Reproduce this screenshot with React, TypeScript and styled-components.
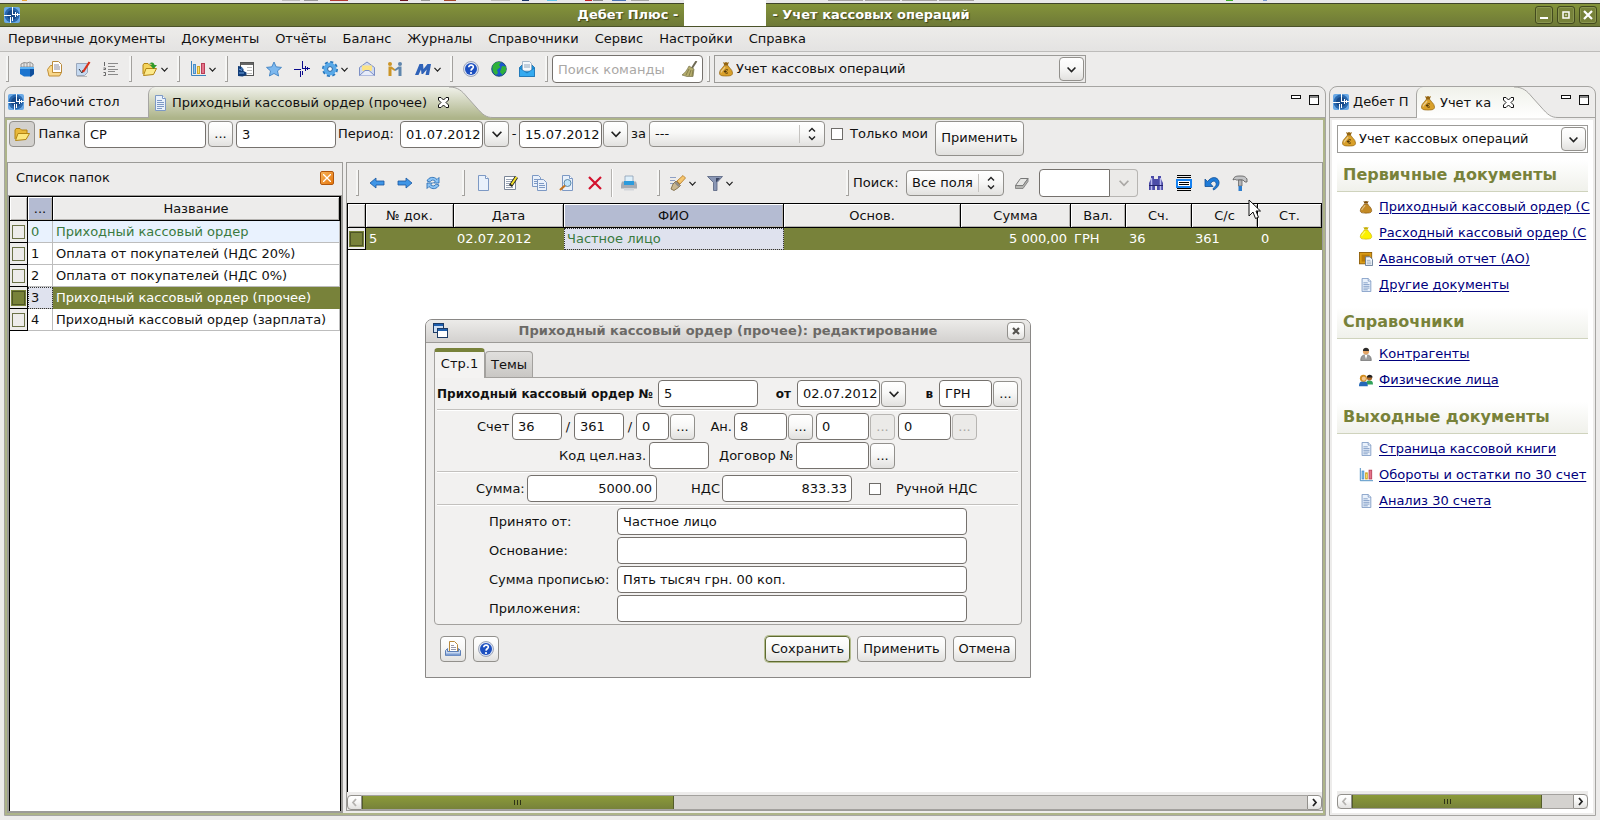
import React from "react";
import styled, { createGlobalStyle, css } from "styled-components";

const c = {
  face: "#edeceb",
  olive: "#78823a",
  sage: "#adb489",
  line: "#9c9b98",
  grid: "#bdbdbd",
  field: "#75716d",
};

const Global = createGlobalStyle`
  *, *::before, *::after { box-sizing: border-box; }
  html, body { margin: 0; }
  body, button, input, select {
    font-family: "DejaVu Sans", sans-serif;
    font-size: 13px;
    line-height: 18px;
    color: #111;
  }
  body { background: ${c.face}; }
  svg { display: block; flex: none; }
`;

/* ---------- icons ---------- */

const arrowPts = "1,8 7,3 7,6 15,6 15,10 7,10 7,13";
const crossPath = "M8.5 0v7M0 8.5h7M8 7.5h8M6.5 10v6M8.5 10v4M11.5 5v5M13.5 6v3";

const page = (
  <>
    <path d="M3.5 .5h7l3 3v12h-10z" fill="#e9f1fb" stroke="#7d99c4" />
    <path d="M10.500 .5v3h3" fill="#fff" stroke="#7d99c4" />
  </>
);

const bag = (fill: string, edge: string) => (
  <>
    <path d="M5 1l1.500.8L8 1l1.500.8L11 1 9.800 4H6.200z" fill={edge} />
    <path d="M6 4.500h4c.5 2 4.500 4 4.500 7.500 0 2.500-2 3-6.500 3s-6.500-.5-6.500-3C1.500 8.500 5.500 6.500 6 4.500z" fill={fill} stroke={edge} strokeWidth=".7" />
    <path d="M7 6c-1 2-3.500 3.500-4 5.500" stroke="#fff" strokeOpacity=".45" strokeWidth="1.300" fill="none" />
  </>
);

const drawings: Record<string, React.ReactNode> = {
  logo: (
    <>
      <rect width="16" height="16" rx="2" fill="#6aa9e6" />
      <circle cx="8" cy="8" r="7.500" fill="#2a68ae" />
      <circle cx="8" cy="8" r="5" fill="#174a8a" />
      <path d={crossPath} stroke="#fff" />
    </>
  ),
  cross: <path d={crossPath} stroke="#0a0a8c" />,
  bucket: (
    <>
      <path d="M2 6V3l3-1.500 3 .5 3-1 3 2v3z" fill="#e4e4e4" stroke="#7c7c7c" strokeWidth=".8" />
      <path d="M5 2v4M8 2v4M11 2v4" stroke="#888" strokeWidth=".8" />
      <path d="M1 6h14v7l-3 2.500H5L1 13z" fill="#1b74cf" />
      <path d="M1 6h14v2H1z" fill="#5eb2f3" />
      <path d="M11 8h4v5l-3 2.500h-1z" fill="#0f4f9c" />
    </>
  ),
  papers: (
    <>
      <path d="M5.500 .5h6l3 3v8h-9z" fill="#fff" stroke="#b98a3c" />
      <path d="M7 4h5M7 6h6M7 8h6" stroke="#8a8a9c" />
      <path d="M.5 8.500l3-4h2v7h9l-2 3.500H2z" fill="#f9d88b" stroke="#c08e36" />
    </>
  ),
  signdoc: (
    <>
      <path d="M1.500 2.500h11v9l-3 3h-8z" fill="#c5d9f0" stroke="#9aa7bb" />
      <path d="M4 8l3 4 1-3" stroke="#333" fill="none" />
      <path d="M8 11l6.500-10" stroke="#d7321c" strokeWidth="2.200" />
      <path d="M2 15.500h10" stroke="#bbb" />
    </>
  ),
  numlist: (
    <>
      <path d="M5 2.500h10M5 5.500h7M5 8.500h10M5 10.500h7M5 13.500h10" stroke="#8a8a8a" />
      <path d="M1.500 1v4M.5 7h2v1.500h-2M.5 11.500h2v3h-2" stroke="#666" fill="none" />
    </>
  ),
  folder: (
    <>
      <path d="M1 13V4l1-1.500h4L7.500 4H13v3" fill="#e9b93a" stroke="#b28413" />
      <path d="M1.500 14.500L4 7.500h11.500l-3.500 6z" fill="#fce77e" stroke="#b28413" />
    </>
  ),
  folderup: (
    <>
      <path d="M1 13V4l1-1.500h4L7.500 4H12v3" fill="#f4d35c" stroke="#b28413" />
      <path d="M1.500 14.500L4 7.500h10.500l-3 6z" fill="#fce98a" stroke="#b28413" />
      <path d="M7 3c3-2.500 5-1.500 5.500 1h2.500l-3.500 4-3.500-4h2C9.500 2.500 8.500 2.500 7 3z" fill="#2f9a2b" />
    </>
  ),
  chart: (
    <>
      <path d="M1.500 0v14.500H16" fill="none" stroke="#3c83bd" />
      <rect x="3.500" y="3.500" width="2" height="9" fill="#8cc3ee" stroke="#4b8fc9" />
      <rect x="7.500" y="5.500" width="2" height="7" fill="#fbe06a" stroke="#cfa52c" />
      <rect x="11.500" y="2.500" width="3" height="10" fill="#e5748a" stroke="#b83d56" />
    </>
  ),
  panel: (
    <>
      <rect x="2.500" y="1.500" width="13" height="13" fill="#fff" stroke="#555" />
      <path d="M3 3h12" stroke="#666" strokeWidth="2" />
      <path d="M9 6.500h5M9 9.500h5M9 12.500h5" stroke="#bbb" />
      <path d="M0 5l3 .5 2.500 2.500V10l3 1.500v2.500l-4 1.500L0 15z" fill="#123c78" />
      <path d="M1 8l3 1.500M1 12h5M4 6.500v2" stroke="#6ea6e4" />
    </>
  ),
  star: <path d="M8 1l2.200 4.800 5.300.6-4 3.500 1.100 5.100L8 12.500 3.400 15l1.100-5.100-4-3.500 5.300-.6z" fill="#7db8ee" stroke="#3478be" strokeWidth=".8" />,
  gear: (
    <>
      <circle cx="8" cy="8" r="6.800" fill="none" stroke="#2877bd" strokeWidth="2.400" strokeDasharray="3 2.340" />
      <circle cx="8" cy="8" r="4.500" fill="none" stroke="#59a9e8" strokeWidth="4" />
      <circle cx="8" cy="8" r="2.400" fill="#fff" stroke="#1d5f9f" />
    </>
  ),
  envelope: (
    <>
      <path d="M.5 6.500L8 1l7.500 5.500v8H.5z" fill="#cfd9f1" stroke="#7c8fc4" />
      <path d="M3 4.500h10v5l-5 2-5-2z" fill="#fbe487" />
      <path d="M.5 14.500L6 9.500h4l5.500 5" fill="#e7ecf9" stroke="#7c8fc4" />
    </>
  ),
  people: (
    <>
      <circle cx="3" cy="3" r="2" fill="#cc9527" />
      <circle cx="13" cy="3" r="2" fill="#5f86ad" />
      <path d="M1.500 5.500h3l4 3-1 1.500-3-2v7h-3z" fill="#cc9527" />
      <path d="M14.500 5.500h-3l-4 3 1 1.500 3-2v7h3z" fill="#5f86ad" />
    </>
  ),
  monogram: <path d="M0 14L4.500 3H8l.5 5L12.500 3H16l-2 11h-3.500l1.200-5.500L8 13H6.500L6 8.500 3.500 14z" fill="#2f62b8" />,
  help: (
    <>
      <circle cx="8" cy="8" r="7.500" fill="#dbe3f3" stroke="#8a93ab" strokeWidth=".8" />
      <circle cx="8" cy="8" r="6" fill="#1c4fc0" />
      <path d="M5.800 6.300C5.800 3.400 10.500 3.600 10.300 6.200 10.200 7.700 8.100 7.900 8 9.600" fill="none" stroke="#fff" strokeWidth="1.700" />
      <circle cx="8" cy="12" r="1.100" fill="#fff" />
    </>
  ),
  globe: (
    <>
      <circle cx="8" cy="8" r="7.300" fill="#1b57cf" stroke="#0f3d63" strokeWidth=".8" />
      <path d="M2 4c2-3 5-3.500 8-2.500L8 4 9.500 6 6 9l1 3-2 2C2 12 .5 8 2 4zM11 5l4 .5V10l-3.500 4L9 11l1-3z" fill="#2fb13b" />
    </>
  ),
  mail: (
    <>
      <path d="M.5 6.500L3 4h10l2.500 2.500v9H.5z" fill="#1d8fd8" stroke="#1a6cab" strokeWidth=".8" />
      <path d="M3.500 .5h7l2 2V10h-9z" fill="#f4f8fc" stroke="#94a9bf" strokeWidth=".8" />
      <path d="M5 4h6M5 6h6" stroke="#8fa5bb" />
      <path d="M.5 7l7.500 5 7.500-5v8.500H.5z" fill="#35aaf0" stroke="#1a6cab" strokeWidth=".6" />
    </>
  ),
  broom: (
    <>
      <path d="M14.500 0L10 7" stroke="#6f6a55" strokeWidth="2" />
      <path d="M7 5l5 3-1 7.500H5l-5-1.500c3-2 5-5 7-9z" fill="#b5ad6d" stroke="#77724b" strokeWidth=".7" />
      <path d="M7 8l-3 6M9 9l-2 6M11 9l-1 6" stroke="#716b3c" strokeWidth=".7" />
    </>
  ),
  money: (
    <>
      {bag("#d9a02a", "#94640f")}
      <path d="M10 9c-2.500-1-3.500.5-3.200 2 .3 1.500 2 1.500 3.200.8M5.800 10.500h3" fill="none" stroke="#4c3208" strokeWidth=".9" />
    </>
  ),
  bagbrown: bag("#c48a24", "#7c4c08"),
  bagyellow: bag("#fbf100", "#c6ae00"),
  safe: (
    <>
      <rect x=".5" y=".5" width="14" height="13" fill="#d99b16" stroke="#8c5c05" />
      <rect x="3" y="3" width="9" height="8" fill="#b87a08" />
      <path d="M7.500 5.500h5l3 3v7h-8z" fill="#f2f6fb" stroke="#5c7391" />
      <path d="M9 9.500h4M9 11.500h5M9 13.500h5" stroke="#9ab" />
    </>
  ),
  doc: (
    <>
      {page}
      <path d="M5 5.500h5M5 7.500h7M5 9.500h7M5 11.500h7M5 13.500h5" stroke="#7d99c4" />
    </>
  ),
  blank: page,
  edit: (
    <>
      <path d="M1.500 1.500h11v13h-11z" fill="#fff" stroke="#7a8597" />
      <path d="M3 4.500h7M3 6.500h6M3 8.500h5M3 10.500h4M3 12.500h7" stroke="#9aa4b4" />
      <path d="M7.500 11l6-9" stroke="#222" strokeWidth="3.600" />
      <path d="M8.500 9.500l5-7.500" stroke="#f4e22c" strokeWidth="2" />
    </>
  ),
  copy: (
    <>
      <path d="M1.500 .5h6l2 2v9h-8z" fill="#eaf1fb" stroke="#7d99c4" />
      <path d="M3 4.500h5M3 6.500h3M3 8.500h3" stroke="#7d99c4" />
      <path d="M6.500 4.500h6l3 3v8h-9z" fill="#eaf1fb" stroke="#7d99c4" />
      <path d="M8 8.500h5M8 10.500h6M8 12.500h6" stroke="#7d99c4" />
    </>
  ),
  find: (
    <>
      {page}
      <circle cx="8.500" cy="8" r="3.500" fill="#bfe4fa" stroke="#5d89a8" />
      <path d="M6 10.500L1 15" stroke="#c5741e" strokeWidth="2.200" />
    </>
  ),
  cut: <path d="M2 2l12 12M14 2L2 14" stroke="#d3122e" strokeWidth="2.200" />,
  printer: (
    <>
      <path d="M4 1h8v6H4z" fill="#dff0fb" stroke="#8aa0b4" strokeWidth=".8" />
      <path d="M1 6.500h14l1 3v4H0v-4z" fill="#a6abb3" />
      <path d="M3 6h10v4H3z" fill="#2b9bdd" />
      <path d="M3 13h10v2.500H3z" fill="#d3d6da" />
    </>
  ),
  printout: (
    <>
      <path d="M4.500 10V.5h5l3 3V10" fill="#fff" stroke="#b98a3c" />
      <path d="M6 4.500h3M6 6.500h5M6 8.500h5" stroke="#99a" />
      <path d="M.5 9.500l2-2v3h11v-3l2 2v5H.5z" fill="#c6d7f0" stroke="#5d7fb6" />
      <path d="M1 13.500h14" stroke="#7f9fd2" strokeWidth="2" />
    </>
  ),
  left: <polygon points={arrowPts} fill="#3f95e6" stroke="#19579f" strokeWidth=".8" />,
  right: <polygon points={arrowPts} transform="rotate(180 8 8)" fill="#3f95e6" stroke="#19579f" strokeWidth=".8" />,
  refresh: (
    <>
      <path d="M2 6c1.500-4 7-5 10-1.500l2-2v5.500H8.500l1.800-1.800C8.500 4.500 6 4.800 4.800 7z" fill="#8cc4f5" stroke="#1f65ad" strokeWidth=".8" />
      <path d="M14 10c-1.500 4-7 5-10 1.500l-2 2V8h5.500l-1.800 1.800c1.800 1.700 4.300 1.400 5.500-.8z" fill="#8cc4f5" stroke="#1f65ad" strokeWidth=".8" />
    </>
  ),
  torch: (
    <>
      <path d="M0 2.500h6M0 5.500h5M0 8.500h4" stroke="#8fa0c4" />
      <path d="M7 6l6-5.500 2.500 2.500L10 9z" fill="#f6c66f" stroke="#b0761f" strokeWidth=".8" />
      <path d="M6 6l4.500 4.500-2 2L4 15.500 1 14l2-5z" fill="#c9b791" stroke="#77623a" strokeWidth=".8" />
      <path d="M6 6.500l4 4-1.500 1.500-4-4z" fill="#8f8b86" />
    </>
  ),
  funnel: (
    <>
      <path d="M.5 1.500h15l-5.500 6v8H6.500v-8z" fill="#8a97b5" stroke="#55617e" strokeWidth=".8" />
      <path d="M9 3h4L9 7.500V14z" fill="#3c4663" />
    </>
  ),
  eraser: (
    <>
      <path d="M6.500 3.500h7.500l-5 7H1.500z" fill="#e6e6e4" stroke="#777" />
      <path d="M14 3.500v3l-5 7H1.500v-3H9z" fill="#b5b5b2" stroke="#777" strokeWidth=".8" />
    </>
  ),
  binoc: (
    <>
      <path d="M3 1h3v3h4V1h3v3l2 4v7H9v-4H7v4H1V8l2-4z" fill="#4c4ca8" />
      <path d="M3.500 3v12M12.500 3v12" stroke="#b9b9ee" strokeWidth="1.500" />
      <path d="M1 10.500h14" stroke="#23236d" />
    </>
  ),
  rows: (
    <>
      <path d="M1 .5h14M1 2.500h14M1 13.500h14M1 15.500h14" stroke="#000" />
      <rect x="1" y="5" width="14" height="7" fill="#fff" stroke="#1681f0" strokeWidth="2" />
      <path d="M3 7.500h10M3 9.500h10" stroke="#000" />
    </>
  ),
  undo: (
    <path d="M1 4l2.500 2.500C7 2 11.500 1.500 14 4.500c2.500 3.500.5 8-4.500 10.500l-.5-1.500c3-2 4-4.500 2.500-6.500-1.300-1.600-3.500-1-5 1.800L9 11.500H1z" fill="#1f7bd8" stroke="#134f94" strokeWidth=".8" />
  ),
  hammer: (
    <>
      <path d="M1 5c1-4 4-4 7-4 3 0 5 0 7 3v3h-2l-2-2H5.500L4.500 5c-1.500-1-2.500-.5-3.500 0z" fill="#c3c4c6" stroke="#555" strokeWidth=".8" />
      <path d="M6.500 5h3.500v6H6.500z" fill="#b3b4b6" stroke="#666" strokeWidth=".8" />
      <path d="M6.500 11h3.500v5H6.500z" fill="#2d7ecf" />
    </>
  ),
  person: (
    <>
      <path d="M2 15.500c0-5 2-6.500 6-6.500s6 1.500 6 6.500z" fill="#9b9b9b" stroke="#666" strokeWidth=".8" />
      <path d="M6.500 9h3L8 14z" fill="#fff" />
      <circle cx="8" cy="5" r="3.500" fill="#e3a566" />
      <path d="M4.500 4.500c0-5 7-5 7 0z" fill="#2b2b2b" />
    </>
  ),
  couple: (
    <>
      <path d="M8 13c0-4 1.500-4.500 4-4.500s4 1 4 4.500z" fill="#32a25a" />
      <circle cx="12" cy="5.500" r="3" fill="#a8652a" />
      <path d="M9 5c0-4 6.500-4 6.500 0z" fill="#222" />
      <path d="M0 15c0-4.500 2-5.500 5-5.500s5 1 5 5.500z" fill="#2568b8" />
      <circle cx="5" cy="6" r="4" fill="#d18d1f" />
      <circle cx="5.500" cy="6.500" r="2.400" fill="#f3c58e" />
    </>
  ),
  windows: (
    <>
      <rect x=".5" y=".5" width="10" height="9" fill="#cfe0f3" stroke="#1e3c66" />
      <path d="M1 2h9" stroke="#1e5fae" strokeWidth="2" />
      <rect x="4.500" y="5.500" width="10" height="9" fill="#fff" stroke="#1e3c66" />
      <path d="M5 7h9" stroke="#1e5fae" strokeWidth="2" />
    </>
  ),
};

const Icon = ({ name, size = 16 }: { name: string; size?: number }) => (
  <svg width={size} height={size} viewBox="0 0 16 16" fill="none" aria-hidden="true">
    {drawings[name]}
  </svg>
);

const Chevron = ({ size = 8, color = "#222" }: { size?: number; color?: string }) => (
  <svg width={size} height={size} viewBox="0 0 8 8" fill="none" aria-hidden="true">
    <path d="M0.500 2.200L4 5.800 7.500 2.200" stroke={color} strokeWidth="1.400" />
  </svg>
);

const UpDown = () => (
  <svg width="8" height="14" viewBox="0 0 8 14" fill="none" aria-hidden="true">
    <path d="M1 4.500L4 1.500l3 3M1 9.500l3 3 3-3" stroke="#222" strokeWidth="1.400" />
  </svg>
);

const CloseMark = () => (
  <svg width="11" height="11" viewBox="0 0 11 11" aria-hidden="true">
    <path
      d="M.5 .5h2.500l2.500 2.500L8 .5h2.500V3L8 5.500 10.500 8v2.500H8L5.500 8 3 10.500H.5V8L3 5.500.5 3z"
      fill="#fff"
      stroke="#111"
    />
  </svg>
);

/* ---------- shared controls ---------- */

const raised = css`
  border: 1px solid #92908c;
  border-radius: 4px;
  background: linear-gradient(#fff, #f8f8f7 45%, #e2e1df);
`;

const Button = styled.button<{ $w?: number; $h?: number; $primary?: boolean }>`
  ${raised}
  display: flex;
  align-items: center;
  justify-content: center;
  flex: none;
  width: ${(p) => (p.$w ? `${p.$w}px` : "auto")};
  height: ${(p) => p.$h ?? 26}px;
  padding: 0;
  ${(p) => p.$primary && `border-color: #5f6b31; box-shadow: 0 0 0 1px #b3bb8d;`}
  &:disabled { color: #aaa8a5; border-color: #b7b5b2; background: #ebeae8; }
`;

const TextBox = styled.input<{ $w?: number; $right?: boolean }>`
  width: ${(p) => (p.$w ? `${p.$w}px` : "auto")};
  ${(p) => !p.$w && "flex: 1; min-width: 0;"}
  flex-shrink: 0;
  height: 27px;
  padding: 0 ${(p) => (p.$right ? 4 : 1)}px 0 5px;
  border: 1px solid ${c.field};
  border-radius: 4px;
  background: #fff;
  text-align: ${(p) => (p.$right ? "right" : "left")};
`;

const Check = styled.input.attrs({ type: "checkbox" })`
  appearance: none;
  flex: none;
  width: 12px;
  height: 12px;
  margin: 0;
  border: 1px solid #6e6c69;
  background: #fff;
`;

const Caption = styled.label<{ $w?: number; $align?: string; $bold?: boolean }>`
  flex: none;
  width: ${(p) => (p.$w ? `${p.$w}px` : "auto")};
  text-align: ${(p) => p.$align ?? "left"};
  font-size: ${(p) => (p.$bold ? 12 : 13)}px;
  font-weight: ${(p) => (p.$bold ? 700 : 400)};
  white-space: nowrap;
`;

const Gap = styled.span<{ $w: number }>`
  flex: none;
  width: ${(p) => p.$w}px;
`;

const SpinWrap = styled.div<{ $w: number }>`
  ${raised}
  display: flex;
  align-items: center;
  flex: none;
  width: ${(p) => p.$w}px;
  height: 26px;
  padding-right: 8px;
`;

const PlainSelect = styled.select`
  appearance: none;
  flex: 1;
  min-width: 0;
  height: 18px;
  margin-right: 8px;
  padding: 0 0 0 5px;
  border: 0;
  border-right: 1px solid #c5c3c0;
  background: transparent;
`;

const Spin = ({ id, value, w }: { id: string; value: string; w: number }) => (
  <SpinWrap $w={w}>
    <PlainSelect id={id}>
      <option>{value}</option>
    </PlainSelect>
    <UpDown />
  </SpinWrap>
);

const ComboWrap = styled.div<{ $w?: number; $white?: boolean }>`
  display: flex;
  align-items: center;
  flex: none;
  width: ${(p) => (p.$w ? `${p.$w}px` : "auto")};
  height: 28px;
  padding: 0 1px 0 3px;
  border: 1px solid ${c.line};
  background: ${(p) => (p.$white ? "#fff" : c.face)};
  select { border: 0; padding-left: 2px; margin: 0; }
`;

const Combo = ({ w, white, label }: { w?: number; white?: boolean; label: string }) => (
  <ComboWrap $w={w} $white={white}>
    <Icon name="money" />
    <PlainSelect aria-label={label}>
      <option>Учет кассовых операций</option>
    </PlainSelect>
    <Button $w={25} $h={24} aria-label="Открыть список"><Chevron size={9} /></Button>
  </ComboWrap>
);

/* ---------- window frame ---------- */

const Shell = styled.div`
  display: flex;
  flex-direction: column;
  min-height: 100vh;
  min-width: 1280px;
`;

const Backdrop = styled.div`
  height: 3px;
  overflow: hidden;
  background: #e9e8ea;
`;

const TitleBar = styled.header`
  display: flex;
  align-items: center;
  gap: 4px;
  height: 24px;
  padding: 0 3px 0 4px;
  border-top: 1px solid #3f442a;
  border-bottom: 1px solid #4b5229;
  background: linear-gradient(#84933a, #6e7937);
`;

const Title = styled.h1`
  display: flex;
  align-items: center;
  justify-content: center;
  flex: 1;
  gap: 6px;
  margin: 0;
  padding-right: 8px;
  color: #fff;
  font-size: 13px;
  font-weight: 700;
  line-height: 22px;
  text-shadow: 1px 1px 1px #3c431b;
`;

const Blank = styled.span`
  width: 82px;
  height: 26px;
  margin-top: -4px;
  background: #fff;
`;

const FrameButton = styled.button`
  display: grid;
  place-items: center;
  width: 18px;
  height: 18px;
  padding: 0;
  border: 1px solid #434a1e;
  border-radius: 3px;
  background: #77823a;
  box-shadow: inset 0 0 0 1px #8a9650;
`;

const MenuBar = styled.nav`
  display: flex;
  align-items: center;
  gap: 16px;
  height: 25px;
  padding: 0 8px;
  border-bottom: 1px solid #bdbcba;
  background: linear-gradient(#edecea, #e4e3e2);
`;

const MenuItem = styled.button`
  padding: 0;
  border: 0;
  background: none;
  white-space: nowrap;
`;

const Toolbar = styled.div<{ $pane?: boolean }>`
  display: flex;
  align-items: center;
  flex: none;
  height: ${(p) => (p.$pane ? 40 : 34)}px;
  padding-left: ${(p) => (p.$pane ? 5 : 2)}px;
`;

const Grip = styled.span<{ $before?: number }>`
  flex: none;
  width: 3px;
  height: 26px;
  margin: 0 4px 0 ${(p) => p.$before ?? 4}px;
  border-right: 1px solid #a3a19e;
  border-bottom: 1px solid #a3a19e;
  background: #f6f6f5;
`;

const Rule = styled.span`
  flex: none;
  width: 2px;
  height: 28px;
  margin: 0 2px;
  border-left: 1px solid #b5b3b0;
  background: #fff;
`;

const ToolButton = styled.button<{ $menu?: boolean }>`
  display: flex;
  align-items: center;
  flex: none;
  width: ${(p) => (p.$menu ? 37 : 28)}px;
  height: 28px;
  padding: 0 0 0 6px;
  border: 0;
  background: none;
  gap: 3px;
`;

const Tool = ({ icon, menu, label }: { icon: string; menu?: boolean; label: string }) => (
  <ToolButton $menu={menu} aria-label={label}>
    <Icon name={icon} />
    {menu && <Chevron size={7} />}
  </ToolButton>
);

const CommandBox = styled.div`
  display: flex;
  align-items: center;
  flex: none;
  width: 151px;
  height: 28px;
  padding-right: 4px;
  border: 1px solid ${c.field};
  border-radius: 4px;
  background: #fff;
  input { border: 0; height: 24px; }
  input::placeholder { color: #aaa8a6; opacity: 1; }
`;

const Workspace = styled.main`
  display: flex;
  flex: 1;
  gap: 3px;
  padding: 0 4px 4px;
`;

/* ---------- tab folders ---------- */

const Folder = styled.section<{ $w?: number }>`
  display: flex;
  flex-direction: column;
  ${(p) => (p.$w ? `flex: none; width: ${p.$w}px;` : "flex: 1; min-width: 0;")}
  border: 1px solid #a6a5a2;
  border-radius: 8px 8px 0 0;
`;

const TabStrip = styled.div`
  display: flex;
  flex: none;
  height: 31px;
`;

const Tab = styled.button<{ $w: number; $on?: boolean; $tint?: string }>`
  display: flex;
  align-items: center;
  flex: none;
  gap: 4px;
  width: ${(p) => p.$w}px;
  padding: 0 0 0 3px;
  border: 0;
  border-bottom: 1px solid #a6a5a2;
  background: none;
  white-space: nowrap;
  ${(p) =>
    p.$on &&
    css`
      border-bottom: 0;
      border-left: 1px solid #a6a5a2;
      border-radius: 7px 0 0 0;
      background: linear-gradient(#f0f1ea, ${p.$tint});
    `}
`;

const TabClose = styled.span`
  flex: 1;
  display: flex;
  justify-content: flex-end;
`;

const TabTail = ({ from, to, id }: { from: string; to: string; id: string }) => (
  <svg width="44" height="31" viewBox="0 0 44 31" aria-hidden="true">
    <defs>
      <linearGradient id={id} x1="0" y1="0" x2="0" y2="1">
        <stop offset="0" stopColor={from} />
        <stop offset="1" stopColor={to} />
      </linearGradient>
    </defs>
    <path d="M0 0C9 0 13 4 18 10L27 20C34 28 37 30.500 44 30.500V31H0z" fill={`url(#${id})`} />
    <path d="M0 0C9 0 13 4 18 10L27 20C34 28 37 30.500 44 30.500" fill="none" stroke="#a6a5a2" />
  </svg>
);

const TabRest = styled.div`
  display: flex;
  flex: 1;
  justify-content: flex-end;
  gap: 8px;
  padding: 8px 6px 0 0;
  border-bottom: 1px solid #a6a5a2;
`;

const MiniButton = styled.button`
  display: flex;
  align-items: flex-start;
  height: 12px;
  padding: 0;
  border: 0;
  background: none;
`;

const PaneButtons = () => (
  <TabRest>
    <MiniButton aria-label="Свернуть">
      <svg width="10" height="11"><rect x=".5" y=".5" width="9" height="3" fill="#fff" stroke="#111" /></svg>
    </MiniButton>
    <MiniButton aria-label="Развернуть">
      <svg width="10" height="11"><rect x=".5" y=".5" width="9" height="9" fill="#fff" stroke="#111" /><path d="M1 2h8" stroke="#111" /></svg>
    </MiniButton>
  </TabRest>
);

const FolderBody = styled.div<{ $edge: string; $fill: string }>`
  display: flex;
  flex-direction: column;
  flex: 1;
  border: 2px solid ${(p) => p.$edge};
  background: ${(p) => p.$fill};
`;

const FilterBar = styled.form`
  display: flex;
  align-items: center;
  align-self: flex-start;
  height: 42px;
  padding: 0 0 14px 2px;
`;

const Toggle = styled(Button)`
  background: #d3d1ce;
`;

const Apply = styled(Button)`
  margin-bottom: -8px;
`;

const Panes = styled.div`
  display: flex;
  flex: 1;
  gap: 3px;
`;

/* ---------- grids ---------- */

const ListPane = styled.section`
  display: flex;
  flex-direction: column;
  flex: none;
  width: 336px;
  border: 1px solid ${c.line};
  border-bottom-width: 2px;
`;

const ListHead = styled.div`
  display: flex;
  align-items: center;
  justify-content: space-between;
  height: 33px;
  padding: 0 8px 3px;
  h2 { margin: 0; font-size: 13px; font-weight: 400; }
`;

const OrangeClose = styled.button`
  display: grid;
  place-items: center;
  width: 14px;
  height: 14px;
  padding: 0;
  border: 1px solid #b1560c;
  border-radius: 2px;
  background: linear-gradient(135deg, #f8b45c, #e5750a);
`;

const Sheet = styled.div<{ $framed?: boolean }>`
  flex: 1;
  border: 0 solid #000;
  border-width: 1px 0 0 1px;
  background: #fff;
  ${(p) => p.$framed && `margin: 0 1px; border-right-width: 1px; outline: 1px solid ${c.line};`}
`;

const Table = styled.table`
  width: 100%;
  table-layout: fixed;
  border-spacing: 0;
`;

const Th = styled.th<{ $on?: boolean }>`
  height: 24px;
  padding: 0;
  border-right: 1px solid #000;
  border-bottom: 1px solid #000;
  background: ${(p) => (p.$on ? "#b4bbd2" : c.face)};
  box-shadow: inset 1px 1px 0 #fff, inset -1px -1px 0 #b5b3b0;
  font-weight: 400;
`;

const Td = styled.td<{ $sel?: boolean; $tone?: "green" | "focus"; $right?: boolean }>`
  height: 22px;
  padding: 0 3px;
  border-right: 1px solid ${(p) => (p.$sel ? c.olive : c.grid)};
  border-bottom: 1px solid ${(p) => (p.$sel ? c.olive : c.grid)};
  background: ${(p) => (p.$sel ? c.olive : "#fff")};
  color: ${(p) => (p.$sel ? "#fff" : "#111")};
  text-align: ${(p) => (p.$right ? "right" : "left")};
  line-height: 20px;
  white-space: nowrap;
  ${(p) => p.$tone === "green" && "background: #e9f2fe; color: #3a7a3f;"}
  ${(p) =>
    p.$tone === "focus" &&
    "background: #dfe2ee; color: #111; outline: 1px dotted #333; outline-offset: -1px;"}
`;

const MarkCell = styled.td`
  height: 22px;
  padding: 0 0 0 2px;
  border-right: 1px solid #000;
  border-bottom: 1px solid #000;
  background: ${c.face};
  line-height: 0;
`;

const Mark = styled.input.attrs({ type: "checkbox" })`
  appearance: none;
  width: 13px;
  height: 14px;
  margin: 0;
  border: 1px solid #6b7248;
  background: ${c.face};
  &:checked { background: ${c.olive}; box-shadow: 0 0 0 1px ${c.olive}; border-color: #4d5425; }
`;

const folders = [
  "Приходный кассовый ордер",
  "Оплата от покупателей (НДС 20%)",
  "Оплата от покупателей (НДС 0%)",
  "Приходный кассовый ордер (прочее)",
  "Приходный кассовый ордер (зарплата)",
];

const FolderTable = () => (
  <Table>
    <colgroup><col width="18" /><col width="25" /><col /></colgroup>
    <thead>
      <tr><Th /><Th $on>...</Th><Th>Название</Th></tr>
    </thead>
    <tbody>
      {folders.map((name, i) => (
        <tr key={name}>
          <MarkCell><Mark aria-label={name} defaultChecked={i === 3} /></MarkCell>
          <Td $tone={i === 0 ? "green" : i === 3 ? "focus" : undefined}>{i}</Td>
          <Td $sel={i === 3} $tone={i === 0 ? "green" : undefined}>{name}</Td>
        </tr>
      ))}
    </tbody>
  </Table>
);

const DocPane = styled.section`
  position: relative;
  display: flex;
  flex-direction: column;
  flex: 1;
  min-width: 0;
  margin-bottom: 2px;
  border: 1px solid ${c.line};
`;

const docWidths = [18, 88, 110, 220, 177, 110, 55, 66, 66];
const docHeads = ["№ док.", "Дата", "ФИО", "Основ.", "Сумма", "Вал.", "Сч.", "С/с", "Ст."];

const GreenText = styled.span`
  color: #3a7a3f;
`;

const DocTable = () => (
  <Table>
    <colgroup>
      {docWidths.map((w, i) => <col key={i} width={w} />)}
      <col />
    </colgroup>
    <thead>
      <tr><Th />{docHeads.map((h) => <Th key={h} $on={h === "ФИО"}>{h}</Th>)}</tr>
    </thead>
    <tbody>
      <tr>
        <MarkCell><Mark aria-label="Документ 5" defaultChecked /></MarkCell>
        <Td $sel>5</Td>
        <Td $sel>02.07.2012</Td>
        <Td $tone="focus"><GreenText>Частное лицо</GreenText></Td>
        <Td $sel />
        <Td $sel $right>5 000,00</Td>
        <Td $sel>ГРН</Td>
        <Td $sel>36</Td>
        <Td $sel>361</Td>
        <Td $sel>0</Td>
      </tr>
    </tbody>
  </Table>
);

const SearchField = styled.div`
  display: flex;
  flex: none;
  margin: 0 4px 0 3px;
  input { height: 28px; border-radius: 4px 0 0 4px; }
  button { border-radius: 0 4px 4px 0; border-left: 0; }
`;

/* ---------- scrollbar ---------- */

const ScrollRow = styled.div`
  display: flex;
  flex: none;
  height: 18px;
  padding-top: 3px;
  background: ${c.face};
`;

const ScrollButton = styled.button<{ $end?: boolean }>`
  ${raised}
  display: grid;
  place-items: center;
  flex: none;
  width: 15px;
  padding: 0;
  border-radius: ${(p) => (p.$end ? "0 4px 4px 0" : "4px 0 0 4px")};
`;

const Track = styled.div`
  flex: 1;
  border: 1px solid #a3a19e;
  border-width: 1px 0;
  background: #d4d2cf;
`;

const Thumb = styled.div<{ $share: number }>`
  display: flex;
  align-items: center;
  justify-content: center;
  gap: 2px;
  width: ${(p) => p.$share}%;
  height: 13px;
  border: 1px solid #545d2a;
  border-width: 0 1px;
  background: linear-gradient(#8b9a39, #77823a);
  i { width: 1px; height: 5px; background: #2e3316; }
`;

const ScrollArrow = ({ flip, color }: { flip?: boolean; color: string }) => (
  <svg width="7" height="9" viewBox="0 0 7 9" fill="none" aria-hidden="true">
    <path d={flip ? "M5 1L2 4.500 5 8" : "M2 1l3 3.500L2 8"} stroke={color} strokeWidth="1.800" />
  </svg>
);

const Scrollbar = ({ share }: { share: number }) => (
  <ScrollRow>
    <ScrollButton aria-label="Влево"><ScrollArrow flip color="#b5b3b0" /></ScrollButton>
    <Track><Thumb $share={share}><i /><i /><i /></Thumb></Track>
    <ScrollButton $end aria-label="Вправо"><ScrollArrow color="#222" /></ScrollButton>
  </ScrollRow>
);

/* ---------- dialog ---------- */

const Dialog = styled.section`
  position: absolute;
  left: 78px;
  top: 156px;
  display: flex;
  flex-direction: column;
  width: 606px;
  border: 1px solid #8a8886;
  border-radius: 7px 7px 0 0;
  background: ${c.face};
`;

const DialogTitle = styled.header`
  display: flex;
  align-items: center;
  height: 23px;
  padding: 0 5px 0 7px;
  border-bottom: 1px solid #9c9a97;
  border-radius: 6px 6px 0 0;
  background: linear-gradient(#ecebe9, #d3d1cf);
  h2 {
    flex: 1;
    margin: 0;
    color: #6b6966;
    font-size: 13px;
    text-align: center;
  }
`;

const DialogTabs = styled.div`
  display: flex;
  align-items: flex-end;
  height: 34px;
  padding-left: 8px;
`;

const DialogTab = styled.button<{ $on?: boolean }>`
  height: ${(p) => (p.$on ? 30 : 26)}px;
  width: ${(p) => (p.$on ? 51 : 48)}px;
  padding: 0;
  border: 1px solid #a3a19e;
  border-bottom: 0;
  border-radius: 4px 4px 0 0;
  background: linear-gradient(#e0dfdd, #c9c7c4);
  ${(p) =>
    p.$on &&
    css`
      border-top: 4px solid ${c.olive};
      margin-bottom: -1px;
      padding-bottom: 3px;
      background: #f4f3f2;
      z-index: 1;
    `}
`;

const DialogPanel = styled.form`
  display: flex;
  flex-direction: column;
  gap: 2px;
  margin: 0 8px;
  padding: 2px 3px 2px 2px;
  border: 1px solid #a3a19e;
  border-radius: 0 4px 4px 4px;
  background: #f2f1f0;
`;

const FormRow = styled.div<{ $in?: number }>`
  display: flex;
  align-items: center;
  height: 27px;
  padding-left: ${(p) => p.$in ?? 0}px;
`;

const Divider = styled.hr`
  width: 100%;
  height: 2px;
  margin: 0;
  border: 0;
  border-top: 1px solid #c3c1be;
  background: #fff;
`;

const DialogFoot = styled.footer`
  display: flex;
  gap: 7px;
  padding: 11px 14px 15px;
`;

const Spread = styled.span`
  flex: 1;
`;

const noteRows = [
  ["Принято от:", "Частное лицо"],
  ["Основание:", ""],
  ["Сумма прописью:", "Пять тысяч грн. 00 коп."],
  ["Приложения:", ""],
];

const EditDialog = () => (
  <Dialog role="dialog" aria-labelledby="dialog-title">
    <DialogTitle>
      <Icon name="windows" />
      <h2 id="dialog-title">Приходный кассовый ордер (прочее): редактирование</h2>
      <Button $w={18} $h={18} aria-label="Закрыть">
        <svg width="8" height="8"><path d="M1 1l6 6M7 1L1 7" stroke="#55534f" strokeWidth="2.200" /></svg>
      </Button>
    </DialogTitle>
    <DialogTabs>
      <DialogTab $on>Стр.1</DialogTab>
      <DialogTab>Темы</DialogTab>
    </DialogTabs>
    <DialogPanel>
      <FormRow>
        <Caption $bold $w={221} htmlFor="num">Приходный кассовый ордер №</Caption>
        <TextBox $w={100} id="num" defaultValue="5" />
        <Caption $bold $w={33} $align="right" htmlFor="from">от</Caption>
        <Gap $w={6} />
        <TextBox $w={83} id="from" defaultValue="02.07.2012" />
        <Gap $w={1} />
        <Button type="button" $w={25} aria-label="Календарь"><Chevron size={10} /></Button>
        <Caption $bold $w={27} $align="right" htmlFor="cur">в</Caption>
        <Gap $w={6} />
        <TextBox $w={53} id="cur" defaultValue="ГРН" />
        <Gap $w={1} />
        <Button type="button" $w={25}>...</Button>
      </FormRow>
      <Divider />
      <FormRow $in={40}>
        <Caption $w={35} htmlFor="acc">Счет</Caption>
        <TextBox $w={50} id="acc" defaultValue="36" />
        <Caption $w={12} $align="center" htmlFor="sub">/</Caption>
        <TextBox $w={50} id="sub" defaultValue="361" />
        <Caption $w={12} $align="center" htmlFor="art">/</Caption>
        <TextBox $w={33} id="art" defaultValue="0" />
        <Gap $w={1} />
        <Button type="button" $w={25}>...</Button>
        <Caption $w={37} $align="right" htmlFor="an1">Ан.</Caption>
        <Gap $w={2} />
        <TextBox $w={53} id="an1" defaultValue="8" />
        <Gap $w={1} />
        <Button type="button" $w={25}>...</Button>
        <Gap $w={3} />
        <TextBox $w={53} aria-label="Аналитика 2" defaultValue="0" />
        <Gap $w={1} />
        <Button type="button" $w={25} disabled>...</Button>
        <Gap $w={3} />
        <TextBox $w={53} aria-label="Аналитика 3" defaultValue="0" />
        <Gap $w={1} />
        <Button type="button" $w={25} disabled>...</Button>
      </FormRow>
      <FormRow $in={122}>
        <Caption $w={90} htmlFor="code">Код цел.наз.</Caption>
        <TextBox $w={60} id="code" />
        <Gap $w={10} />
        <Caption $w={77} htmlFor="contract">Договор №</Caption>
        <TextBox $w={73} id="contract" />
        <Gap $w={1} />
        <Button type="button" $w={25}>...</Button>
      </FormRow>
      <Divider />
      <FormRow $in={39}>
        <Caption $w={51} htmlFor="sum">Сумма:</Caption>
        <TextBox $right $w={130} id="sum" defaultValue="5000.00" />
        <Gap $w={34} />
        <Caption $w={31} htmlFor="vat">НДС</Caption>
        <TextBox $right $w={130} id="vat" defaultValue="833.33" />
        <Gap $w={17} />
        <Check id="manual" />
        <Gap $w={15} />
        <Caption htmlFor="manual">Ручной НДС</Caption>
      </FormRow>
      <Divider />
      {noteRows.map(([label, value], i) => (
        <FormRow key={label} $in={52}>
          <Caption $w={128} htmlFor={`note${i}`}>{label}</Caption>
          <TextBox $w={350} id={`note${i}`} defaultValue={value} />
        </FormRow>
      ))}
    </DialogPanel>
    <DialogFoot>
      <Button $w={26} aria-label="Печать"><Icon name="printout" /></Button>
      <Button $w={26} aria-label="Справка"><Icon name="help" /></Button>
      <Spread />
      <Button $w={85} $primary>Сохранить</Button>
      <Button $w={89}>Применить</Button>
      <Button $w={63}>Отмена</Button>
    </DialogFoot>
  </Dialog>
);

const Pointer = styled.svg`
  position: absolute;
  left: 901px;
  top: 36px;
`;

/* ---------- side panel ---------- */

const Side = styled.div`
  display: flex;
  flex-direction: column;
  flex: 1;
  padding: 5px 5px 4px;
`;

const Sections = styled.div`
  flex: 1;
  padding-top: 7px;
`;

const SectionHead = styled.h2`
  height: 32px;
  margin: 0 0 2px;
  padding-left: 6px;
  border-bottom: 1px solid #cfd3bd;
  background: linear-gradient(#fff, #f0f1eb);
  color: ${c.olive};
  font-size: 16px;
  line-height: 30px;
  white-space: nowrap;
`;

const Links = styled.ul`
  margin: 0 0 9px;
  padding: 0 0 0 22px;
  list-style: none;
  li { display: flex; align-items: center; gap: 6px; height: 26px; white-space: nowrap; }
  a { color: #00007d; text-underline-offset: 2px; }
`;

const sections = [
  {
    title: "Первичные документы",
    items: [
      ["bagbrown", "Приходный кассовый ордер (С"],
      ["bagyellow", "Расходный кассовый ордер (С"],
      ["safe", "Авансовый отчет (АО)"],
      ["doc", "Другие документы"],
    ],
  },
  {
    title: "Справочники",
    items: [
      ["person", "Контрагенты"],
      ["couple", "Физические лица"],
    ],
  },
  {
    title: "Выходные документы",
    items: [
      ["doc", "Страница кассовой книги"],
      ["chart", "Обороты и остатки по 30 счет"],
      ["doc", "Анализ 30 счета"],
    ],
  },
];

const menus = [
  "Первичные документы", "Документы", "Отчёты", "Баланс", "Журналы",
  "Справочники", "Сервис", "Настройки", "Справка",
];

const specks: [number, number, string][] = [
  [22, 5, "#e8a33a"], [282, 18, "#bdbbbd"], [304, 14, "#9b999b"], [330, 18, "#b23a34"],
  [400, 8, "#6b1420"], [421, 9, "#999"], [444, 12, "#a4472c"], [491, 19, "#bbb"],
  [522, 7, "#1b3568"], [547, 10, "#62c4ea"], [585, 7, "#c02020"], [593, 10, "#8a8a8a"],
  [612, 14, "#4b73b4"], [631, 18, "#a5a5a5"], [828, 35, "#a7a3a3"], [865, 35, "#a7a3a3"],
  [902, 35, "#a7a3a3"], [939, 35, "#a7a3a3"], [1226, 7, "#3fae2a"], [1263, 4, "#7b9bd0"],
];

export default function App() {
  return (
    <>
      <Global />
      <Shell>
        <Backdrop>
          <svg width="1600" height="3" aria-hidden="true">
            {specks.map(([x, w, fill]) => <rect key={x} x={x} width={w} height="1" fill={fill} />)}
          </svg>
        </Backdrop>
        <TitleBar>
          <Icon name="logo" />
          <Title>
            <span>Дебет Плюс -</span>
            <Blank />
            <span>- Учет кассовых операций</span>
          </Title>
          <FrameButton aria-label="Свернуть окно">
            <svg width="10" height="10"><path d="M1 8h8" stroke="#fff" strokeWidth="2" /></svg>
          </FrameButton>
          <FrameButton aria-label="Развернуть окно">
            <svg width="8" height="8"><rect x="1" y="1" width="6" height="6" fill="none" stroke="#fff" strokeWidth="1.500" /><path d="M3 4h2" stroke="#fff" /></svg>
          </FrameButton>
          <FrameButton aria-label="Закрыть окно">
            <svg width="10" height="10"><path d="M1 1l8 8M9 1L1 9" stroke="#fff" strokeWidth="2.200" /></svg>
          </FrameButton>
        </TitleBar>
        <MenuBar>
          {menus.map((m) => <MenuItem key={m}>{m}</MenuItem>)}
        </MenuBar>
        <Toolbar>
          <Grip />
          <Tool icon="bucket" label="Архив" />
          <Tool icon="papers" label="Документы" />
          <Tool icon="signdoc" label="Правка" />
          <Tool icon="numlist" label="Список" />
          <Grip />
          <Tool icon="folderup" menu label="Открыть" />
          <Grip />
          <Tool icon="chart" menu label="Отчёты" />
          <Grip />
          <Tool icon="panel" label="Панель" />
          <Tool icon="star" label="Избранное" />
          <Tool icon="cross" label="Дебет Плюс" />
          <Tool icon="gear" menu label="Настройки" />
          <Tool icon="envelope" label="Сообщения" />
          <Tool icon="people" label="Контакты" />
          <Tool icon="monogram" menu label="Модули" />
          <Grip />
          <Tool icon="help" label="Справка" />
          <Tool icon="globe" label="Сайт" />
          <Tool icon="mail" label="Почта" />
          <Grip />
          <CommandBox>
            <TextBox placeholder="Поиск команды" aria-label="Поиск команды" />
            <Icon name="broom" />
          </CommandBox>
          <Grip />
          <Combo w={372} label="Рабочее место" />
        </Toolbar>
        <Workspace>
          <Folder>
            <TabStrip>
              <Tab $w={143}><Icon name="logo" />Рабочий стол</Tab>
              <Tab $w={301} $on $tint={c.sage}>
                <Icon name="doc" />Приходный кассовый ордер (прочее)<TabClose><CloseMark /></TabClose>
              </Tab>
              <TabTail id="tail-main" from="#f0f1ea" to={c.sage} />
              <PaneButtons />
            </TabStrip>
            <FolderBody $edge={c.sage} $fill={c.face}>
              <FilterBar>
                <Toggle type="button" $w={26} aria-label="Папки"><Icon name="folder" /></Toggle>
                <Caption $w={49} $align="center" htmlFor="dir">Папка</Caption>
                <TextBox $w={122} id="dir" defaultValue="СР" />
                <Gap $w={2} />
                <Button type="button" $w={25}>...</Button>
                <Gap $w={3} />
                <TextBox $w={100} aria-label="Номер папки" defaultValue="3" />
                <Gap $w={2} />
                <Caption $w={62} htmlFor="d1">Период:</Caption>
                <TextBox $w={83} id="d1" defaultValue="01.07.2012" />
                <Gap $w={1} />
                <Button type="button" $w={25} aria-label="Календарь"><Chevron size={10} /></Button>
                <Caption $w={10} $align="center" htmlFor="d2">-</Caption>
                <TextBox $w={83} id="d2" defaultValue="15.07.2012" />
                <Gap $w={1} />
                <Button type="button" $w={25} aria-label="Календарь"><Chevron size={10} /></Button>
                <Caption $w={21} $align="center" htmlFor="range">за</Caption>
                <Spin id="range" value="---" w={176} />
                <Gap $w={6} />
                <Check id="mine" />
                <Gap $w={7} />
                <Caption $w={85} htmlFor="mine">Только мои</Caption>
                <Apply type="button" $w={89} $h={35}>Применить</Apply>
              </FilterBar>
              <Panes>
                <ListPane>
                  <ListHead>
                    <h2>Список папок</h2>
                    <OrangeClose aria-label="Закрыть список">
                      <svg width="8" height="8"><path d="M0 0l8 8M8 0L0 8" stroke="#fff" strokeWidth="1.300" /></svg>
                    </OrangeClose>
                  </ListHead>
                  <Sheet $framed><FolderTable /></Sheet>
                </ListPane>
                <DocPane>
                  <Toolbar $pane>
                    <Grip />
                    <Tool icon="left" label="Назад" />
                    <Tool icon="right" label="Вперёд" />
                    <Tool icon="refresh" label="Обновить" />
                    <Grip $before={15} />
                    <Tool icon="blank" label="Создать" />
                    <Tool icon="edit" label="Изменить" />
                    <Tool icon="copy" label="Копировать" />
                    <Tool icon="find" label="Просмотр" />
                    <Tool icon="cut" label="Удалить" />
                    <Rule />
                    <Tool icon="printer" label="Печать" />
                    <Grip $before={14} />
                    <Tool icon="torch" menu label="Найти" />
                    <Tool icon="funnel" menu label="Фильтр" />
                    <Grip $before={108} />
                    <Caption $w={53} htmlFor="where">Поиск:</Caption>
                    <Spin id="where" value="Все поля" w={98} />
                    <Gap $w={4} />
                    <Tool icon="eraser" label="Очистить" />
                    <SearchField>
                      <TextBox $w={71} aria-label="Текст поиска" />
                      <Button $w={28} $h={28} disabled aria-label="История"><Chevron size={10} color="#aaa8a5" /></Button>
                    </SearchField>
                    <Tool icon="binoc" label="Искать" />
                    <Tool icon="rows" label="Строки" />
                    <Tool icon="undo" label="Отменить" />
                    <Tool icon="hammer" label="Настроить" />
                  </Toolbar>
                  <Sheet><DocTable /></Sheet>
                  <Scrollbar share={33} />
                  <EditDialog />
                  <Pointer width="13" height="21" viewBox="0 0 13 21" aria-hidden="true">
                    <path d="M1 1v16l4-4 2.500 6.500 3-1.200L8 12h4.500z" fill="#fff" stroke="#111" />
                  </Pointer>
                </DocPane>
              </Panes>
            </FolderBody>
          </Folder>
          <Folder $w={267}>
            <TabStrip>
              <Tab $w={86}><Icon name="logo" />Дебет П</Tab>
              <Tab $w={98} $on $tint="#fff">
                <Icon name="money" />Учет ка<TabClose><CloseMark /></TabClose>
              </Tab>
              <TabTail id="tail-side" from="#f0f1ea" to="#ffffff" />
              <PaneButtons />
            </TabStrip>
            <FolderBody $edge={c.face} $fill="#fff">
              <Side>
                <Combo white label="Раздел" />
                <Sections>
                  {sections.map((s) => (
                    <React.Fragment key={s.title}>
                      <SectionHead>{s.title}</SectionHead>
                      <Links>
                        {s.items.map(([icon, text]) => (
                          <li key={text}><Icon name={icon} size={14} /><a href="#">{text}</a></li>
                        ))}
                      </Links>
                    </React.Fragment>
                  ))}
                </Sections>
                <Scrollbar share={86} />
              </Side>
            </FolderBody>
          </Folder>
        </Workspace>
      </Shell>
    </>
  );
}
